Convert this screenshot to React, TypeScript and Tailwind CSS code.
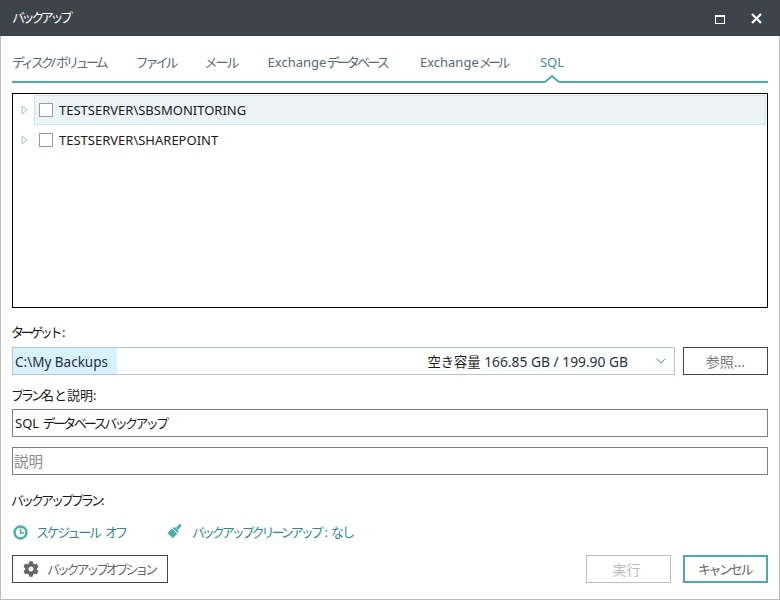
import { FaCog } from "react-icons/fa";

const Kana = ({ children }: { children: React.ReactNode }) => (
  <span className="tracking-[-3px]">{children}</span>
);

const tabs: { label: React.ReactNode; className: string; active?: boolean }[] = [
  { label: <><Kana>ディスク</Kana>/<Kana>ボリューム</Kana></>, className: "" },
  { label: <Kana>ファイル</Kana>, className: "ml-[30px]" },
  { label: <span className="tracking-[-2px]">メール</span>, className: "ml-[29px]" },
  { label: <>Exchange<span className="tracking-[-2.8px]">データベース</span></>, className: "ml-[30px]" },
  { label: <>Exchange<span className="tracking-[-3.6px]">メール</span></>, className: "ml-[33px]" },
  { label: "SQL", className: "ml-[33px]", active: true },
];

function TreeRow({ label, selected }: { label: string; selected?: boolean }) {
  return (
    <div className="flex h-[30px] items-center">
      <div className="flex w-[20px] shrink-0 justify-center pl-[1px]">
        <svg width="7" height="10" viewBox="0 0 7 10">
          <path d="M1 1 L6 5 L1 9 Z" fill="none" stroke="#a9bcc4" />
        </svg>
      </div>
      <div
        className={`flex h-[30px] flex-1 items-center gap-[6px] border pl-[4px] text-[13px] text-[#1a1a1a] ${
          selected ? "border-[#cfe5e8] bg-[#ecf4f6]" : "border-transparent"
        }`}
      >
        <span className="h-[14px] w-[14px] border border-[#a09a98] bg-white" />
        <span className="pt-[2px]">{label}</span>
      </div>
    </div>
  );
}

export default function App() {
  return (
    <div
      className="flex h-[600px] w-[780px] flex-col border-x border-b border-[#bdbdbd] bg-white text-[13px] text-[#1a1a1a]"
      style={{ fontFamily: '"Noto Sans", "Noto Sans CJK JP", sans-serif' }}
    >
      <div className="-mx-px flex h-9 shrink-0 items-center justify-between bg-[#3e444c] pl-3 pr-[18px] text-white">
        <span className="tracking-[-3.4px]">バックアップ</span>
        <div className="flex items-center gap-[26px]">
          <svg width="10" height="9" viewBox="0 0 10 9" className="mt-[2px]">
            <path d="M0 0 H10 V9 H0 Z M1 2 V8 H9 V2 Z" fill="#fff" fillRule="evenodd" />
          </svg>
          <svg width="11" height="11" viewBox="0 0 11 11">
            <path d="M1 1 L10 10 M10 1 L1 10" stroke="#fff" strokeWidth="2.2" />
          </svg>
        </div>
      </div>

      <div className="flex flex-1 flex-col px-[11px]">
        <div className="mt-[15px] flex h-[32px] border-b-2 border-[#4aacb0] text-[#5d6770]">
          {tabs.map((t, i) => (
            <div key={i} className={`relative leading-[22px] ${t.className} ${t.active ? "text-[#3f8f9c]" : ""}`}>
              {t.label}
              {t.active && (
                <svg className="absolute left-1/2 top-[24px] -translate-x-1/2" width="14" height="8" viewBox="0 0 14 8">
                  <path d="M0 7 L7 1 L14 7 V8 H0 Z" fill="#fff" />
                  <path d="M0 7 L7 1 L14 7" fill="none" stroke="#4aacb0" strokeWidth="2" />
                </svg>
              )}
            </div>
          ))}
        </div>

        <div className="mt-[10px] h-[215px] border border-black p-px">
          <TreeRow label="TESTSERVER\SBSMONITORING" selected />
          <TreeRow label="TESTSERVER\SHAREPOINT" />
        </div>

        <div className="mt-[14px] -ml-px h-[20px] leading-[20px]">
          <span className="tracking-[-3.4px]">ターゲット</span>
          <span className="ml-[3px]">:</span>
        </div>
        <div className="mt-[5px] flex h-[28px] gap-2">
          <div className="flex flex-1 items-center border border-[#b8c4d0]">
            <div className="flex h-full w-[104px] items-center bg-[#d8f2fb] pl-[2px] pt-[2px] text-[13.5px] text-[#1f2f3f]">C:\My Backups</div>
            <div className="flex-1 pt-[2px] text-right text-[13.8px]">
              <span className="text-[13.3px]">空き容量</span> <span className="text-[#1f2f3f]">166.85 GB / 199.90 GB</span>
            </div>
            <div className="flex w-[46px] justify-end pr-[8px]">
              <svg width="10" height="6" viewBox="0 0 10 6">
                <path d="M0.5 0.5 L5 5 L9.5 0.5" fill="none" stroke="#4aacb0" />
              </svg>
            </div>
          </div>
          <button className="w-[85px] border border-[#444] text-[14px] text-[#777]">参照...</button>
        </div>

        <div className="mt-[10px] -ml-px h-[20px] leading-[20px]"><Kana>プラン</Kana>名と説明:</div>
        <div className="mt-[4px] flex h-[28px] items-center border border-[#808080] pl-[2px] pt-[1px]">
          SQL&nbsp;<span className="tracking-[-2.6px]">データベースバックアップ</span>
        </div>
        <div className="mt-[10px] flex h-[28px] items-center border border-[#808080] pl-[1px] pt-[1px] text-[14.5px] text-[#8a8a8a]">説明</div>

        <div className="mt-[15px] -ml-px h-[20px] leading-[20px]"><Kana>バックアッププラン</Kana>:</div>

        <div className="mt-[13px] flex h-[20px] items-center text-[#2f8a94]">
          <svg width="15" height="15" viewBox="0 0 15 15" className="ml-[1px] -mt-[2px]">
            <circle cx="7.5" cy="7.5" r="6" fill="none" stroke="#4aacb0" strokeWidth="2.4" />
            <path d="M7.5 3.5 V8 H11" fill="none" stroke="#4aacb0" strokeWidth="1.6" />
          </svg>
          <span className="ml-[8px] tracking-[-2.2px]">スケジュール</span>
          <span className="ml-[5px] tracking-[-3px]">オフ</span>
          <svg width="15" height="15" viewBox="0 0 16 16" className="ml-[41px] -mt-[4px]">
            <g transform="rotate(45 8 8) translate(0.5 0.5)" fill="#4aacb0">
              <rect x="6.5" y="-4" width="3" height="7" rx="1" />
              <path d="M5.5 3 H10.5 L12 5.5 H4 Z" />
              <rect x="4" y="6.3" width="8" height="7" />
            </g>
          </svg>
          <span className="ml-[11px] tracking-[-3.05px]">バックアップクリーンアップ</span>
          <span className="ml-[4px]">:</span>
          <span className="ml-[3px] tracking-[-2px]">なし</span>
        </div>

        <div className="mt-[12px] flex h-[28px] items-stretch text-[#666]">
          <button className="flex w-[156px] items-center border border-[#444] pl-[10px]">
            <FaCog className="h-4 w-4 text-[#666]" />
            <span className="ml-[8px] pt-[1px] tracking-[-3.2px]">バックアップオプション</span>
          </button>
          <button className="ml-auto w-[85px] border border-[#bdbdbd] pr-[4px] pt-[1px] text-[14px] text-[#bdbdbd]">実行</button>
          <button className="ml-3 w-[85px] border-2 border-[#4aacb0] pr-[2px] pt-[2px] tracking-[-2.4px]">キャンセル</button>
        </div>
      </div>
    </div>
  );
}
